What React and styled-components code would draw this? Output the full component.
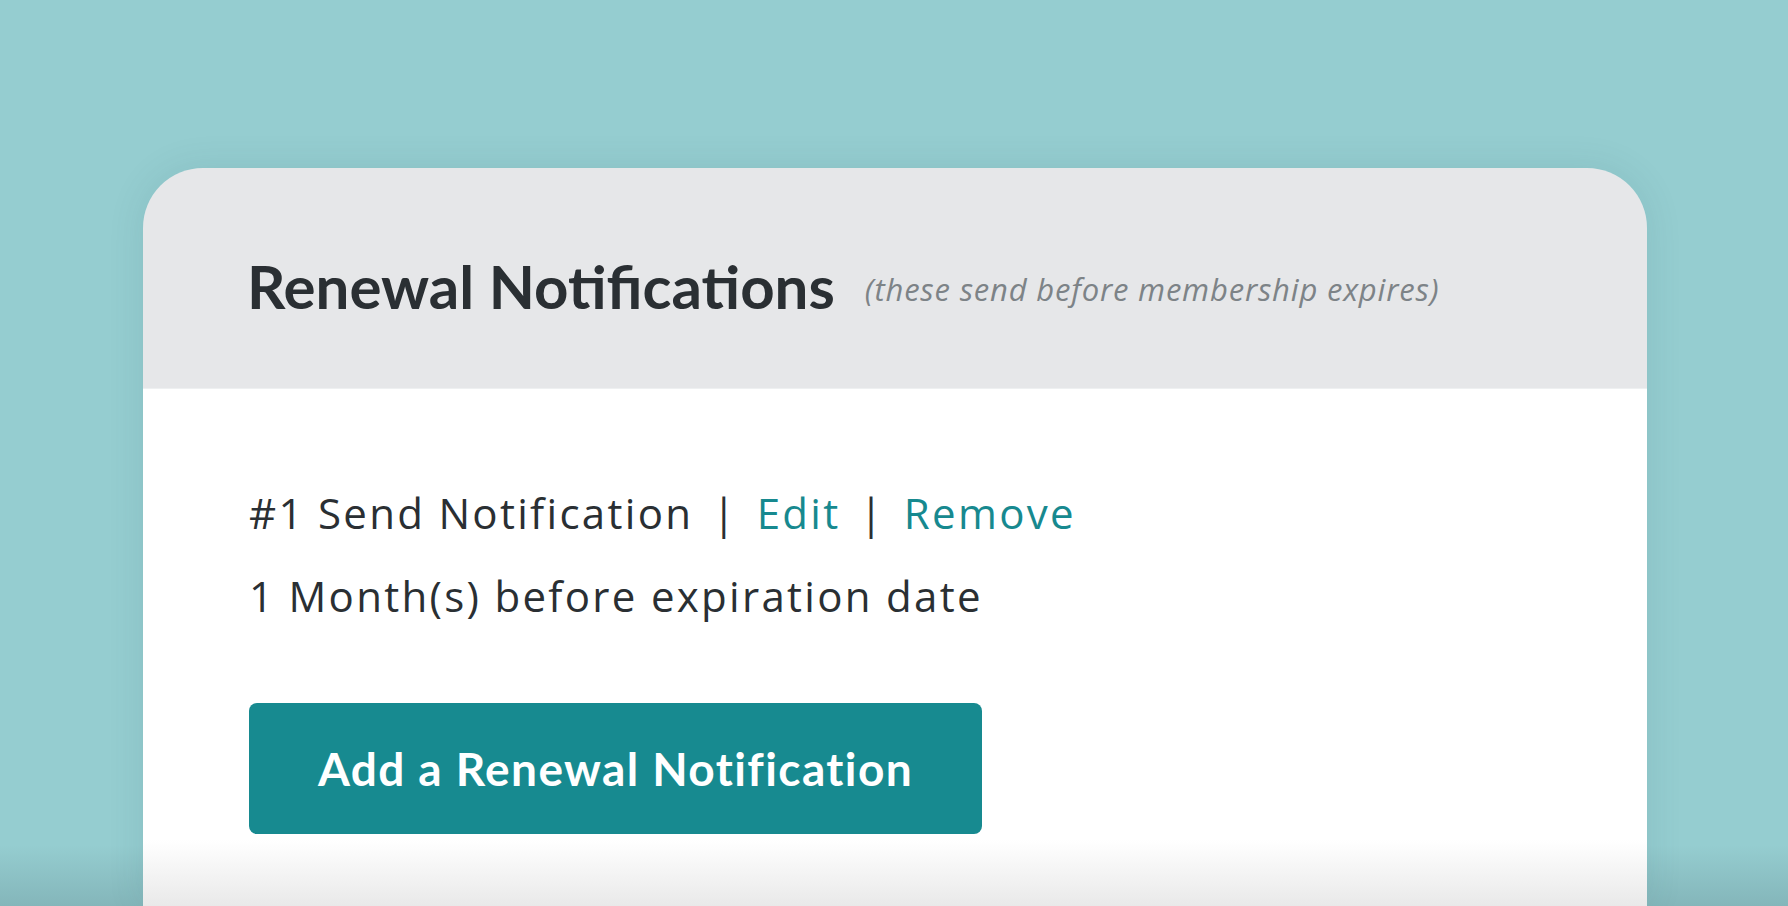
import React from 'react';
import styled, { createGlobalStyle } from 'styled-components';

const GlobalStyle = createGlobalStyle`
    html, body {
        margin: 0;
        padding: 0;
    }
    body {
        font-family: "Open Sans", Lato, sans-serif;
        background: #95cdd0;
        overflow: hidden;
    }
`;

const Page = styled.div`
    height: 906px;
    box-sizing: border-box;
    padding: 168px 141px 0 143px;
    background: linear-gradient(to bottom, #95cdd0 0, #95cdd0 845px, #84b6ba 906px);
`;

const Card = styled.section`
    height: 100%;
    display: flex;
    flex-direction: column;
    border-radius: 60px 60px 0 0;
    overflow: hidden;
    box-shadow: 0 0 36px rgba(40, 90, 95, 0.12);
`;

const Header = styled.header`
    height: 221px;
    flex-shrink: 0;
    box-sizing: border-box;
    padding: 16px 104px 0;
    display: flex;
    align-items: center;
    gap: 30px;
    background: #e6e7e9;
    border-bottom: 1px solid #eef0f1;
`;

const Title = styled.h2`
    margin: 0;
    font-family: Lato, "Open Sans", sans-serif;
    font-size: 60px;
    font-weight: 700;
    color: #2a2f33;
    letter-spacing: 0;
`;

const Hint = styled.span`
    font-size: 31px;
    font-style: italic;
    font-weight: 400;
    letter-spacing: 0.8px;
    color: #7d8387;
    padding-top: 6px;
`;

const Body = styled.div`
    flex: 1;
    padding: 82px 106px 0;
    background: linear-gradient(to bottom, #fff 0, #fff calc(100% - 66px), #e9e9e9 100%);
`;

const Line = styled.div`
    font-size: 42px;
    line-height: 83px;
    letter-spacing: 2.3px;
    color: #2a2f33;
    white-space: nowrap;
`;

const Sep = styled.span`
    margin: 0 19px;
`;

const LinkText = styled.a`
    color: #17898f;
    text-decoration: none;
    cursor: pointer;
`;

const AddButton = styled.button`
    margin-top: 66px;
    width: 733px;
    height: 131px;
    border: none;
    border-radius: 8px;
    background: #178a90;
    color: #fff;
    font-family: Lato, "Open Sans", sans-serif;
    font-size: 46px;
    font-weight: 700;
    letter-spacing: 1.4px;
    cursor: pointer;
`;

const App = () => {
    return (
        <>
            <GlobalStyle />
            <Page>
                <Card>
                    <Header>
                        <Title>Renewal Notifications</Title>
                        <Hint>(these send before membership expires)</Hint>
                    </Header>
                    <Body>
                        <Line>
                            #1 Send Notification<Sep>|</Sep>
                            <LinkText>Edit</LinkText>
                            <Sep>|</Sep>
                            <LinkText>Remove</LinkText>
                        </Line>
                        <Line>1 Month(s) before expiration date</Line>
                        <AddButton>Add a Renewal Notification</AddButton>
                    </Body>
                </Card>
            </Page>
        </>
    );
};

export default App;
